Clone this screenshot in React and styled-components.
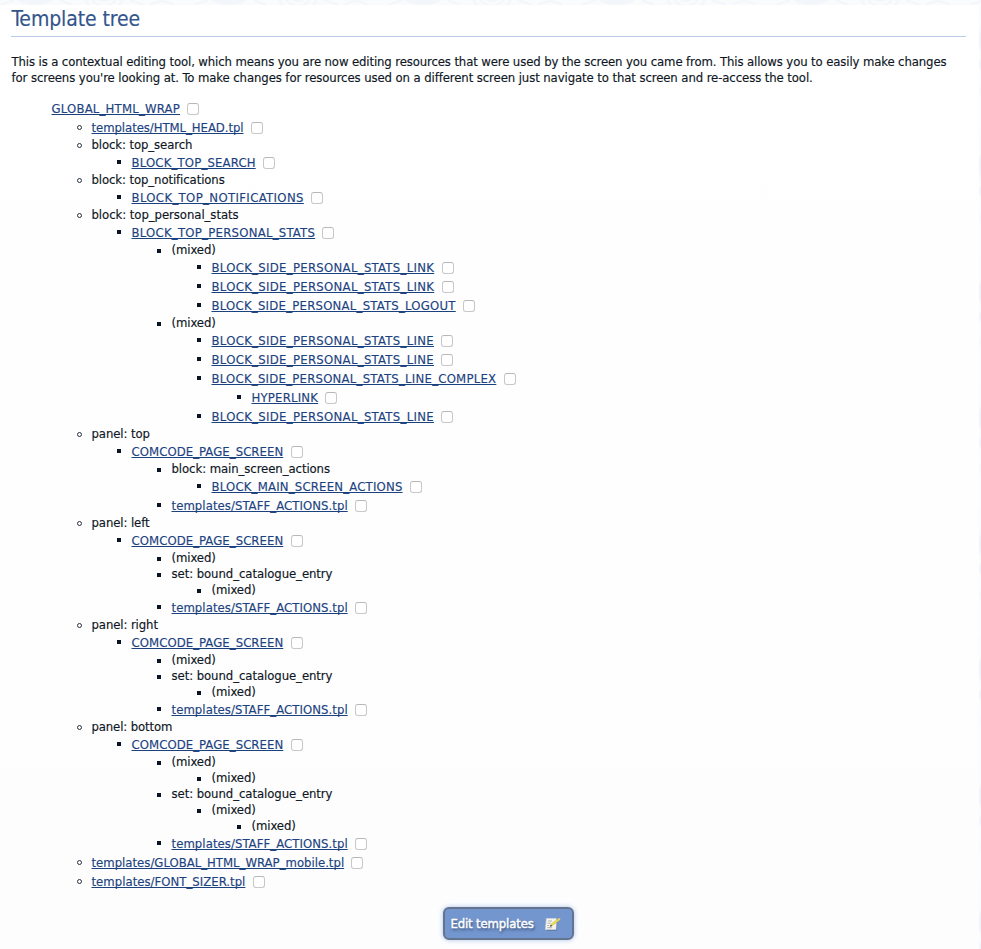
import React from 'react';
import styled, { createGlobalStyle } from 'styled-components';

const GlobalStyle = createGlobalStyle`
  * { box-sizing: border-box; }
  body {
    margin: 0;
    background: #fefefe;
    color: #0e1624;
    font: 13px/16px "DejaVu Sans Condensed", "DejaVu Sans", Tahoma, sans-serif;
    -webkit-text-stroke: 0.15px currentColor;
    overflow: hidden;
  }
`;

const Page = styled.div`
  display: grid;
  grid-template: 5px 944px / 979px 2px;
  width: 981px;
  height: 949px;
`;

const TopEdge = styled.svg`
  grid-column: 1 / 3;
  width: 981px;
  height: 5px;
  display: block;
`;

const SideEdge = styled.div`
  background: repeating-linear-gradient(
    #fafbfd 0 22px, #f0f3fa 30px 40px, #fafbfd 48px 54px,
    #f2f5fb 57px 62px, #fbfcfe 66px 80px, #f7f9fc 84px 88px, #fbfcfe 92px 126px
  );
`;

const Panel = styled.main`
  display: flex;
  flex-direction: column;
  padding: 0 13px 0 11px;
  background: linear-gradient(#ffffff, #fdfdfe 900px);
`;

const Title = styled.h1`
  margin: 0 0 17px;
  height: 32px;
  border-bottom: 1px solid #bccbe6;
  padding-left: 0.5px;
  font-size: 21px;
  font-weight: 400;
  line-height: 28px;
  letter-spacing: -0.1px;
  color: #33558c;
`;

const Intro = styled.p`
  margin: 0 0 14px;
  padding-left: 0.5px;
  white-space: nowrap;
`;

const IntroLine = styled.span`
  display: block;
  letter-spacing: ${(p) => p.$spacing}px;
`;

const Branch = styled.ul`
  list-style: none;
  margin: 0;
  padding: 0 0 0 40px;
`;

const LinkRow = styled.div`
  display: flex;
  height: 19px;
  padding-top: 1px;
  white-space: nowrap;
`;

const TextRow = styled.div`
  display: flex;
  height: 16px;
  line-height: 14px;
  white-space: nowrap;
  letter-spacing: ${(p) => p.$spacing}px;
`;

const Label = styled.span`
  margin-left: 0.5px;
`;

const Circle = styled.span`
  flex: none;
  width: 5px;
  height: 5px;
  margin: 5px 9px 0 -14px;
  border: 1px solid #263040;
  border-radius: 50%;
`;

const Square = styled.span`
  flex: none;
  width: 4px;
  height: 4px;
  margin: ${(p) => (p.$link ? 5 : 6)}px 10px 0 -14px;
  background: #0a1424;
`;

const TemplateLink = styled.a`
  margin-left: 0.5px;
  color: #1b427f;
  letter-spacing: ${(p) => p.$spacing}px;
  text-decoration: underline 1px;
  text-underline-offset: 1px;
  text-decoration-skip-ink: none;
`;

const Check = styled.input`
  appearance: none;
  flex: none;
  width: 12px;
  height: 12px;
  margin: 2px 0 0 7.3px;
  border: 1px solid #c8c8c8;
  border-top-color: #b8b8b8;
  border-radius: 3px;
  background: #fff;
`;

const Actions = styled.div`
  display: flex;
  justify-content: center;
  padding: 15px 0 0 39px;
`;

const EditButton = styled.button`
  display: flex;
  align-items: center;
  width: 131px;
  height: 33px;
  padding: 0 0 0 6px;
  border: 2px solid #64748f;
  border-radius: 6px;
  background: #7496cf;
  box-shadow: 0 0 5px #a9bfe4;
  color: #fff;
  font: inherit;
  letter-spacing: -0.15px;
  text-shadow: 1px 2px 3px #2b3d60;
  white-space: nowrap;
  -webkit-text-stroke: 0.4px #fff;
`;

const NoteSvg = styled.svg`
  width: 17px;
  height: 16px;
  margin-left: 10px;
`;

const NoteIcon = () => (
  <NoteSvg viewBox="0 0 17 16">
    <path d="M2 2.5h10.5l-.2 11.5H2z" fill="#4c6390" opacity=".5" transform="translate(.8 .9)" />
    <path d="M2.4 2.5h10l-.4 11H1.4z" fill="#f4f4f1" stroke="#d5d6d2" strokeWidth=".6" />
    <path d="M4 5h4M3.6 7.2h3M3.3 9.5h2M3.2 11.7h5" stroke="#aaaaa6" strokeWidth=".9" />
    <path d="M6.4 10.2l1-2.4L14.6 2.6l1.2 1.4-7.4 5.4z" fill="#efe04b" stroke="#b5a535" strokeWidth=".4" />
    <path d="M5.8 10.8l1-2 1.5 1.2z" fill="#44402f" />
    <path d="M14.4 2.7l1-.7 1.1 1.3-.9.7z" fill="#e9d98c" />
  </NoteSvg>
);

const link = (label, spacing, children) => ({ kind: 'link', label, spacing, children });
const text = (label, spacing, children) => ({ kind: 'text', label, spacing, children });
const mixed = (children) => text('(mixed)', -0.1, children);
const staff = () => link('templates/STAFF_ACTIONS.tpl', 0.06);
const page = (children) => link('COMCODE_PAGE_SCREEN', 0.06, children);
const entrySet = (children) => text('set: bound_catalogue_entry', -0.07, children);
const statsLine = () => link('BLOCK_SIDE_PERSONAL_STATS_LINE', 0.3);
const statsLink = () => link('BLOCK_SIDE_PERSONAL_STATS_LINK', 0.3);

const tree = [
  link('GLOBAL_HTML_WRAP', 0.2, [
    link('templates/HTML_HEAD.tpl', -0.06),
    text('block: top_search', -0.1, [link('BLOCK_TOP_SEARCH', 0.17)]),
    text('block: top_notifications', -0.1, [link('BLOCK_TOP_NOTIFICATIONS', 0.36)]),
    text('block: top_personal_stats', -0.06, [
      link('BLOCK_TOP_PERSONAL_STATS', 0.25, [
        mixed([statsLink(), statsLink(), link('BLOCK_SIDE_PERSONAL_STATS_LOGOUT', 0.24)]),
        mixed([
          statsLine(),
          statsLine(),
          link('BLOCK_SIDE_PERSONAL_STATS_LINE_COMPLEX', 0.24, [link('HYPERLINK', 0.2)]),
          statsLine(),
        ]),
      ]),
    ]),
    text('panel: top', -0.1, [
      page([
        text('block: main_screen_actions', -0.08, [link('BLOCK_MAIN_SCREEN_ACTIONS', 0.2)]),
        staff(),
      ]),
    ]),
    text('panel: left', -0.1, [page([mixed(), entrySet([mixed()]), staff()])]),
    text('panel: right', -0.1, [page([mixed(), entrySet([mixed()]), staff()])]),
    text('panel: bottom', -0.13, [
      page([mixed([mixed()]), entrySet([mixed([mixed()])]), staff()]),
    ]),
    link('templates/GLOBAL_HTML_WRAP_mobile.tpl', 0),
    link('templates/FONT_SIZER.tpl', 0.02),
  ]),
];

function Marker({ depth, isLink }) {
  if (depth === 0) return null;
  return depth === 1 ? <Circle /> : <Square $link={isLink} />;
}

function Tree({ nodes, depth = 0 }) {
  return (
    <Branch>
      {nodes.map((node, i) => (
        <li key={i}>
          {node.kind === 'link' ? (
            <LinkRow>
              <Marker depth={depth} isLink />
              <TemplateLink $spacing={node.spacing}>{node.label}</TemplateLink>
              <Check type="checkbox" aria-label={node.label} />
            </LinkRow>
          ) : (
            <TextRow $spacing={node.spacing}>
              <Marker depth={depth} />
              <Label>{node.label}</Label>
            </TextRow>
          )}
          {node.children && <Tree nodes={node.children} depth={depth + 1} />}
        </li>
      ))}
    </Branch>
  );
}

export default function App() {
  return (
    <Page>
      <GlobalStyle />
      <TopEdge viewBox="0 0 981 5" aria-hidden="true">
        <defs>
          <pattern id="swirl" width="194" height="5" patternUnits="userSpaceOnUse">
            <rect width="194" height="5" fill="#fafbfd" />
            <ellipse cx="35" cy="-3" rx="19" ry="8" fill="#f3f6fa" />
            <g fill="none" stroke="#f3f6fa" strokeWidth="2">
              <circle cx="104" cy="-8" r="9" />
              <circle cx="104" cy="-8" r="14" />
              <circle cx="104" cy="-8" r="20" />
              <path d="M130 0l14 5M150 5q12-8 24 0M0 5L14 0M60 0l12 5" />
            </g>
          </pattern>
        </defs>
        <rect width="981" height="5" fill="url(#swirl)" />
      </TopEdge>
      <Panel>
        <Title>Template tree</Title>
        <Intro>
          <IntroLine $spacing={-0.118}>
            This is a contextual editing tool, which means you are now editing resources that were used by the screen you came from. This allows you to easily make changes
          </IntroLine>
          <IntroLine $spacing={-0.095}>
            for screens you're looking at. To make changes for resources used on a different screen just navigate to that screen and re-access the tool.
          </IntroLine>
        </Intro>
        <Tree nodes={tree} />
        <Actions>
          <EditButton type="button">
            Edit templates
            <NoteIcon />
          </EditButton>
        </Actions>
      </Panel>
      <SideEdge />
    </Page>
  );
}
